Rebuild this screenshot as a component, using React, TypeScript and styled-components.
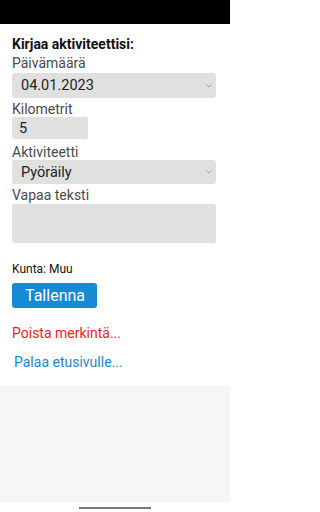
import React from "react";
import styled, { createGlobalStyle } from "styled-components";

const Global = createGlobalStyle`
  html, body { margin: 0; padding: 0; background: #ffffff; }
  body { font-family: Roboto, "Noto Sans", "Liberation Sans", sans-serif; }
  * { box-sizing: border-box; }
`;

const Screen = styled.div`
  width: 230px;
  height: 512px;
  display: flex;
  flex-direction: column;
  background: #ffffff;
  overflow: hidden;
`;

const StatusBar = styled.div`
  height: 24px;
  flex: none;
  background: #000000;
`;

const Content = styled.form`
  height: 362px;
  flex: none;
  padding: 12px 14px 0 12px;
  display: flex;
  flex-direction: column;
  align-items: flex-start;
  background: #ffffff;
`;

const Title = styled.div`
  font-size: 14px;
  line-height: 16px;
  font-weight: 700;
  color: #111111;
`;

const Label = styled.label<{ $top: number }>`
  margin-top: ${(p) => p.$top}px;
  font-size: 14px;
  line-height: 16px;
  color: #4a4a4a;
`;

const SelectWrap = styled.div<{ $h: number; $top: number }>`
  position: relative;
  width: 204px;
  height: ${(p) => p.$h}px;
  margin-top: ${(p) => p.$top}px;
  flex: none;
`;

const Select = styled.select`
  appearance: none;
  -webkit-appearance: none;
  width: 100%;
  height: 100%;
  margin: 0;
  border: none;
  border-radius: 3px;
  background: #e0e0e0;
  padding: 0 0 0 9px;
  font-family: inherit;
  font-size: 14.5px;
  color: #222222;
  outline: none;
`;

const Chevron = styled.svg`
  position: absolute;
  right: 4px;
  top: 50%;
  margin-top: -2px;
  width: 6px;
  height: 4px;
  pointer-events: none;
`;

const Input = styled.input`
  width: 76px;
  height: 22px;
  flex: none;
  margin: 0;
  border: none;
  border-radius: 3px;
  background: #e0e0e0;
  padding: 0 0 0 7px;
  font-family: inherit;
  font-size: 14.5px;
  color: #222222;
  outline: none;
`;

const TextArea = styled.textarea`
  margin-top: 1px;
  width: 204px;
  height: 39px;
  flex: none;
  border: none;
  border-radius: 3px;
  background: #e0e0e0;
  resize: none;
  font-family: inherit;
  outline: none;
`;

const Info = styled.div`
  margin-top: 19px;
  font-size: 12px;
  line-height: 14px;
  color: #111111;
`;

const SaveButton = styled.button`
  margin-top: 7px;
  height: 25px;
  padding: 0 12px 0 13px;
  border: none;
  border-radius: 3px;
  background: #168ad2;
  color: #ffffff;
  font-family: inherit;
  font-size: 16px;
  line-height: 25px;
`;

const TextLink = styled.a<{ $color: string; $top: number; $left: number }>`
  margin-top: ${(p) => p.$top}px;
  margin-left: ${(p) => p.$left}px;
  font-size: 14px;
  line-height: 16px;
  color: ${(p) => p.$color};
  text-decoration: none;
`;

const Footer = styled.div`
  height: 116px;
  flex: none;
  background: #f6f6f6;
`;

const NavBar = styled.div`
  flex: 1;
  display: flex;
  justify-content: center;
  align-items: flex-start;
  padding-top: 5px;
  background: #ffffff;
`;

const Handle = styled.div`
  width: 72px;
  height: 2px;
  background: #7a7a7a;
`;

const Arrow = () => (
  <Chevron viewBox="0 0 6 4">
    <path d="M0.5 0.5 L3 3 L5.5 0.5" fill="none" stroke="#9a9a9a" strokeWidth="0.9" />
  </Chevron>
);

export default function App() {
  return (
    <>
      <Global />
      <Screen>
        <StatusBar />
        <Content onSubmit={(e) => e.preventDefault()}>
          <Title>Kirjaa aktiviteettisi:</Title>
          <Label $top={3}>Päivämäärä</Label>
          <SelectWrap $h={25} $top={2}>
            <Select defaultValue="04.01.2023">
              <option>04.01.2023</option>
            </Select>
            <Arrow />
          </SelectWrap>
          <Label $top={3}>Kilometrit</Label>
          <Input defaultValue="5" />
          <Label $top={5}>Aktiviteetti</Label>
          <SelectWrap $h={24} $top={0}>
            <Select defaultValue="Pyöräily">
              <option>Pyöräily</option>
            </Select>
            <Arrow />
          </SelectWrap>
          <Label $top={3}>Vapaa teksti</Label>
          <TextArea />
          <Info>Kunta: Muu</Info>
          <SaveButton type="submit">Tallenna</SaveButton>
          <TextLink href="#" $color="#ee1c1c" $top={17} $left={0}>
            Poista merkintä...
          </TextLink>
          <TextLink href="#" $color="#1f86c9" $top={13} $left={2}>
            Palaa etusivulle...
          </TextLink>
        </Content>
        <Footer />
        <NavBar>
          <Handle />
        </NavBar>
      </Screen>
    </>
  );
}
